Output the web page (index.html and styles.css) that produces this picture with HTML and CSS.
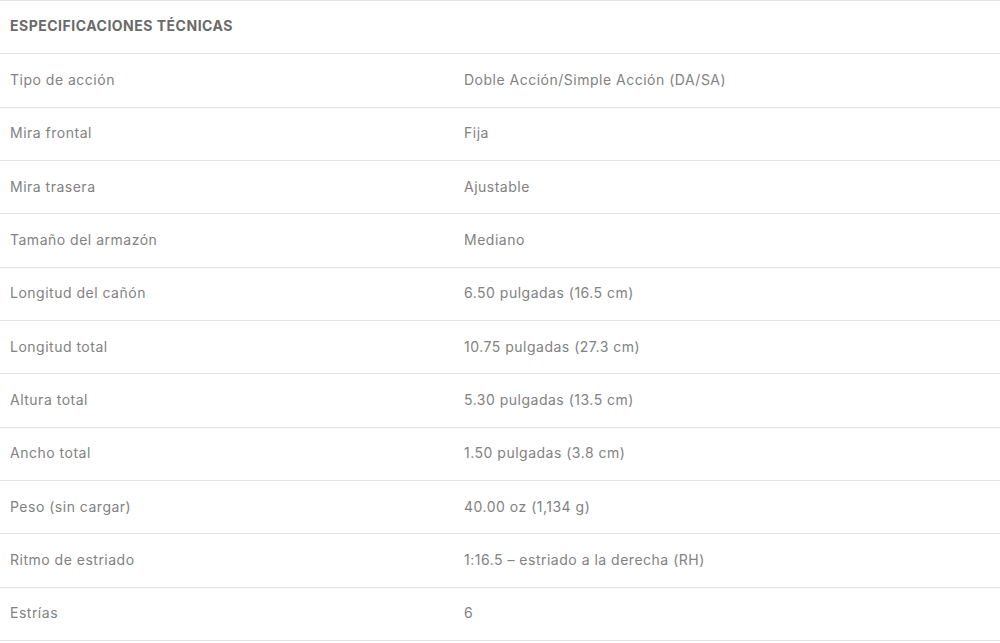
FILE: index.html
```html
<!DOCTYPE html>
<html lang="es">
<head>
<meta charset="utf-8">
<title>Especificaciones técnicas</title>
<link rel="stylesheet" href="styles.css">
</head>
<body>
<div class="specs">
  <div class="row head"><div class="cell">ESPECIFICACIONES TÉCNICAS</div></div>
  <div class="row"><div class="cell">Tipo de acción</div><div class="cell">Doble Acción/Simple Acción (DA/SA)</div></div>
  <div class="row"><div class="cell">Mira frontal</div><div class="cell">Fija</div></div>
  <div class="row"><div class="cell">Mira trasera</div><div class="cell">Ajustable</div></div>
  <div class="row"><div class="cell">Tamaño del armazón</div><div class="cell">Mediano</div></div>
  <div class="row"><div class="cell">Longitud del cañón</div><div class="cell">6.50 pulgadas (16.5 cm)</div></div>
  <div class="row"><div class="cell">Longitud total</div><div class="cell">10.75 pulgadas (27.3 cm)</div></div>
  <div class="row"><div class="cell">Altura total</div><div class="cell">5.30 pulgadas (13.5 cm)</div></div>
  <div class="row"><div class="cell">Ancho total</div><div class="cell">1.50 pulgadas (3.8 cm)</div></div>
  <div class="row"><div class="cell">Peso (sin cargar)</div><div class="cell">40.00 oz (1,134 g)</div></div>
  <div class="row"><div class="cell">Ritmo de estriado</div><div class="cell">1:16.5 – estriado a la derecha (RH)</div></div>
  <div class="row"><div class="cell">Estrías</div><div class="cell">6</div></div>
</div>
</body>
</html>
```

FILE: styles.css
```css
html, body {
  margin: 0;
  padding: 0;
  background: #fff;
}
body {
  font-family: Inter, "Open Sans", "Liberation Sans", sans-serif;
  font-size: 14px;
  letter-spacing: 0.5px;
  color: #828282;
}
.specs {
  border-top: 1px solid #e3e3e3;
}
.row {
  display: grid;
  grid-template-columns: 454px 1fr;
  align-items: center;
  height: 53.33px;
  box-sizing: border-box;
  border-bottom: 1px solid #e3e3e3;
}
.cell {
  padding: 0 10px 2px;
  white-space: nowrap;
}
.head .cell {
  font-weight: 700;
  font-size: 14px;
  color: #6a6a6a;
  grid-column: 1 / -1;
  padding-bottom: 3px;
}
```
